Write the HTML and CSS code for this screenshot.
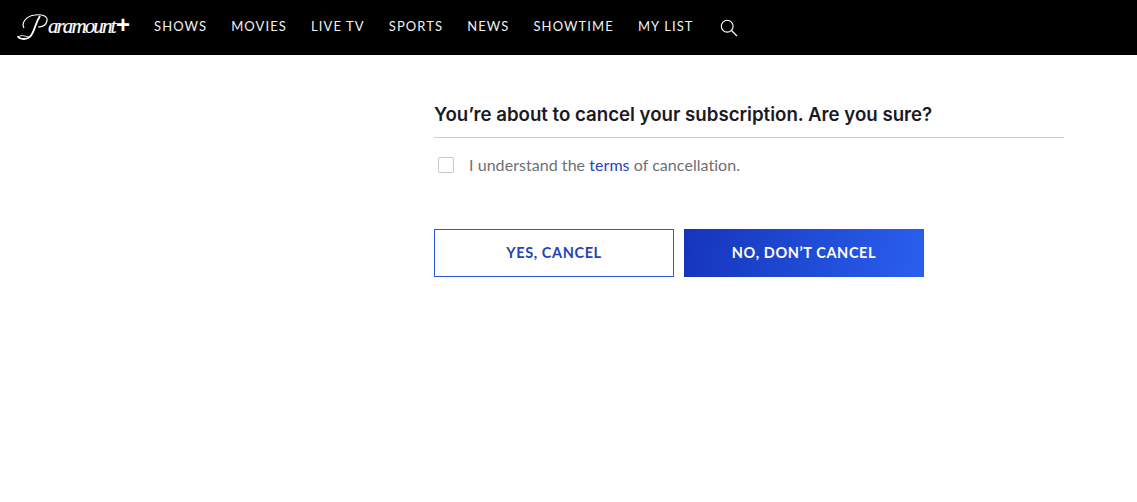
FILE: index.html
```html
<!DOCTYPE html>
<html lang="en">

<head>
    <meta charset="UTF-8">
    <title>Cancel Subscription</title>
    <link rel="stylesheet" href="styles.css">
</head>

<body>
    <!-- Top navigation -->
    <header class="topbar">
        <a class="logo" href="#">
            <svg class="logo-swash" width="34" height="30" viewBox="0 0 34 30" aria-hidden="true">
                <path d="M7 16C4 11 9 4 18 3c7-1 13 1 12 6-1 4-5 6-9 6" fill="none" stroke="#fff" stroke-width="1.2" />
                <path d="M23 4c-4 6-5 12-7 16-2 5-5 7-9 7-3 0-6-1-6-3" fill="none" stroke="#fff" stroke-width="1.9" />
                <path d="M1 25c4-3 8 0 12 0" fill="none" stroke="#fff" stroke-width="0.9" />
            </svg>
            <span class="logo-text">aramount</span><span class="logo-plus">+</span>
        </a>
        <nav class="nav">
            <a href="#">SHOWS</a>
            <a href="#">MOVIES</a>
            <a href="#">LIVE TV</a>
            <a href="#">SPORTS</a>
            <a href="#">NEWS</a>
            <a href="#">SHOWTIME</a>
            <a href="#">MY LIST</a>
        </nav>
        <svg class="search" width="18" height="18" viewBox="0 0 18 18" aria-hidden="true">
            <circle cx="7.2" cy="7.2" r="5.9" fill="none" stroke="#fff" stroke-width="1.1" />
            <path d="M11.5 11.5L17 17" fill="none" stroke="#fff" stroke-width="1.3" />
        </svg>
    </header>

    <!-- Cancel form -->
    <main class="cancel">
        <h1 class="cancel-title">You’re about to cancel your subscription. Are you sure?</h1>
        <label class="agree">
            <span class="box"></span>
            <span>I understand the <a href="#">terms</a> of cancellation.</span>
        </label>
        <div class="actions">
            <button class="btn btn-outline">YES, CANCEL</button>
            <button class="btn btn-solid">NO, DON’T CANCEL</button>
        </div>
    </main>
</body>

</html>
```
FILE: styles.css
```css
* {
    box-sizing: border-box;
    margin: 0;
    padding: 0;
}

body {
    background: #fff;
    font-family: "Lato", "Liberation Sans", sans-serif;
}

a {
    text-decoration: none;
}

/* Top navigation */
.topbar {
    display: flex;
    align-items: center;
    height: 55px;
    padding: 0 0 3px 17px;
    background: #000;
}

.logo {
    display: flex;
    align-items: center;
    width: 137px;
    color: #fff;
    font-family: "Liberation Serif", serif;
    font-style: italic;
}

.logo-swash {
    flex: none;
    margin: 1px -3px 0 0;
}

.logo-text {
    font-size: 21px;
    letter-spacing: -1.9px;
    -webkit-text-stroke: 0.15px #fff;
}

.logo-plus {
    margin: -3px 0 0 1px;
    font-family: "Liberation Sans", sans-serif;
    font-size: 24px;
    font-weight: 700;
    line-height: 24px;
}

.nav {
    display: flex;
    gap: 24px;
}

.nav a {
    color: #f2f2f2;
    font-size: 13px;
    letter-spacing: 1.1px;
}

.search {
    margin: 3px 0 0 26px;
}

/* Cancel form */
.cancel {
    width: 630px;
    margin-left: 434px;
    padding-top: 47px;
}

.cancel-title {
    padding-bottom: 11px;
    border-bottom: 1px solid #ccc;
    color: #1a1a1f;
    font-family: "Inter", "Liberation Sans", sans-serif;
    font-size: 18.65px;
    font-weight: 600;
    line-height: 24px;
}

.agree {
    display: flex;
    align-items: center;
    gap: 15px;
    margin: 18px 0 0 4px;
    color: #6f6f73;
    font-size: 16px;
    letter-spacing: 0.05px;
    line-height: 18px;
}

.agree a {
    color: #1f43bd;
}

.box {
    width: 16px;
    height: 16px;
    border: 1px solid #c9c9c9;
    border-radius: 2px;
}

.actions {
    display: flex;
    gap: 10px;
    margin-top: 55px;
}

.btn {
    width: 240px;
    height: 48px;
    padding-bottom: 2px;
    font-family: inherit;
    font-size: 14.5px;
    font-weight: 700;
    letter-spacing: 0.6px;
}

.btn-outline {
    border: 1px solid #2a57e0;
    background: #fff;
    color: #2344b8;
}

.btn-solid {
    border: none;
    background: linear-gradient(100deg, #1535bb, #2a5fee);
    color: #fff;
}
```
